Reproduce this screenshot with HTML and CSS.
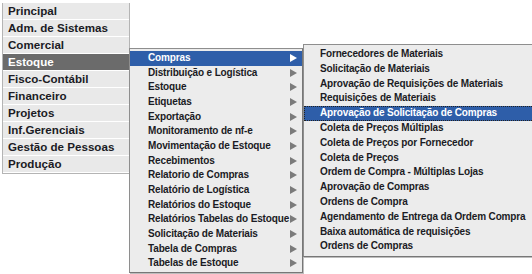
FILE: index.html
```html
<!DOCTYPE html>
<html lang="pt">
<head>
    <meta charset="UTF-8">
    <title>Menu</title>
    <link rel="stylesheet" href="styles.css">
</head>
<body>
    <ul class="menu">
        <li>Principal</li>
        <li>Adm. de Sistemas</li>
        <li>Comercial</li>
        <li class="active">Estoque
            <ul class="sub sub-estoque">
                <li class="active">Compras<span class="arrow"></span>
                    <ul class="sub sub-compras">
                        <li>Fornecedores de Materiais</li>
                        <li>Solicitação de Materiais</li>
                        <li>Aprovação de Requisições de Materiais</li>
                        <li>Requisições de Materiais</li>
                        <li class="active focus">Aprovação de Solicitação de Compras</li>
                        <li>Coleta de Preços Múltiplas</li>
                        <li>Coleta de Preços por Fornecedor</li>
                        <li>Coleta de Preços</li>
                        <li>Ordem de Compra - Múltiplas Lojas</li>
                        <li>Aprovação de Compras</li>
                        <li>Ordens de Compra</li>
                        <li>Agendamento de Entrega da Ordem Compra</li>
                        <li>Baixa automática de requisições</li>
                        <li>Ordens de Compras</li>
                    </ul>
                </li>
                <li>Distribuição e Logística<span class="arrow"></span></li>
                <li>Estoque<span class="arrow"></span></li>
                <li>Etiquetas<span class="arrow"></span></li>
                <li>Exportação<span class="arrow"></span></li>
                <li>Monitoramento de nf-e<span class="arrow"></span></li>
                <li>Movimentação de Estoque<span class="arrow"></span></li>
                <li>Recebimentos<span class="arrow"></span></li>
                <li>Relatorio de Compras<span class="arrow"></span></li>
                <li>Relatório de Logística<span class="arrow"></span></li>
                <li>Relatórios do Estoque<span class="arrow"></span></li>
                <li>Relatórios Tabelas do Estoque<span class="arrow"></span></li>
                <li>Solicitação de Materiais<span class="arrow"></span></li>
                <li>Tabela de Compras<span class="arrow"></span></li>
                <li>Tabelas de Estoque<span class="arrow"></span></li>
            </ul>
        </li>
        <li>Fisco-Contábil</li>
        <li>Financeiro</li>
        <li>Projetos</li>
        <li>Inf.Gerenciais</li>
        <li>Gestão de Pessoas</li>
        <li>Produção</li>
    </ul>
</body>
</html>
```

FILE: styles.css
```css
html, body {
    height: 274px;
}
body {
    margin: 0;
    background: #fff;
    font-family: "Liberation Sans", Arial, sans-serif;
    font-weight: bold;
    color: #1b1b24;
}
ul {
    list-style: none;
    margin: 0;
    padding: 0;
}
.menu {
    width: 126px;
    margin: 3px 0 0 2px;
    border: 1px solid #b4b4b4;
    border-top: none;
    background: #fff;
}
.menu > li {
    position: relative;
    height: 16px;
    line-height: 16px;
    padding-left: 5px;
    margin-bottom: 1px;
    font-size: 11.6px;
    white-space: nowrap;
    background: #e9e9e9;
}
.menu > li.active {
    z-index: 2;
    background: #6b6b6b;
    color: #fff;
}
.sub {
    position: absolute;
    z-index: 3;
    background: #ececec;
    border: 1px solid #8e8e8e;
    border-right-color: #777;
    border-bottom-color: #777;
    box-shadow: 1px 1px 0 #bdbdbd;
    color: #1b1b24;
}
.sub li {
    position: relative;
    font-size: 10px;
    letter-spacing: -0.15px;
    white-space: nowrap;
}
.sub-estoque {
    left: 126px;
    top: -6px;
    width: 172px;
    padding: 2px 0 1px;
}
.sub-estoque > li {
    height: 14.67px;
    line-height: 14.67px;
    padding-left: 18px;
}
.sub-estoque > li.active {
    background: #2e5ea9;
    color: #fff;
}
.arrow {
    position: absolute;
    right: 5px;
    top: 3px;
    width: 0;
    height: 0;
    border-left: 7px solid #7b7b7b;
    border-top: 4px solid transparent;
    border-bottom: 4px solid transparent;
}
.active > .arrow {
    border-left-color: #fff;
}
.sub-compras {
    left: 173px;
    top: -7px;
    width: 230px;
    padding: 2px 0;
}
.sub-compras > li {
    height: 14.8px;
    line-height: 14.8px;
    padding-left: 16px;
    color: #1b1b24;
}
.sub-compras > li.active {
    background: #2e5ea9;
    color: #fff;
}
.sub-compras > li.focus {
    outline: 1px dotted #222;
    outline-offset: -1px;
}
```
